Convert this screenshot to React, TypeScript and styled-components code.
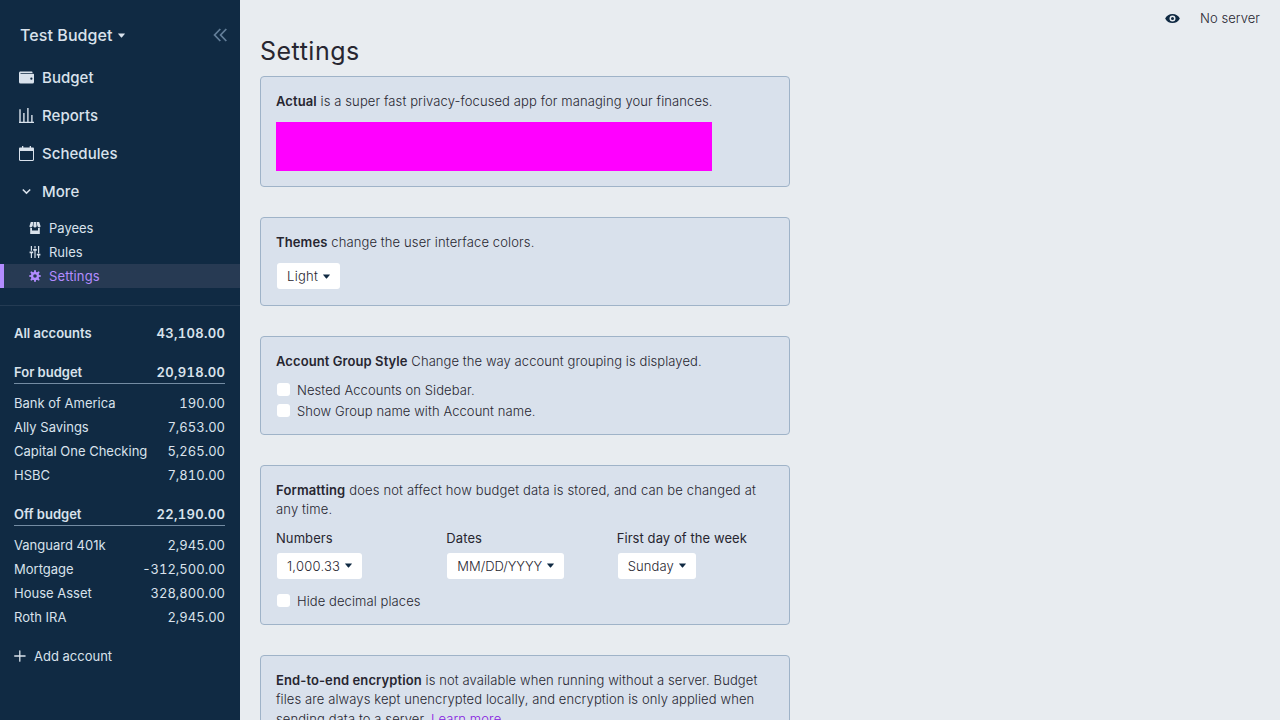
import React from 'react';
import styled, { createGlobalStyle } from 'styled-components';

const Global = createGlobalStyle`
  * { box-sizing: border-box; }
  html, body, #root { height: 100%; }
  body {
    margin: 0;
    overflow: hidden;
    font-family: Inter, 'Liberation Sans', sans-serif;
    font-size: 13px;
    color: #272630;
    background: #e8ecf0;
  }
  button { font: inherit; color: inherit; letter-spacing: inherit; margin: 0; }
  svg { display: block; flex-shrink: 0; }
  p { margin: 0; }
`;

const Layout = styled.div`
  display: flex;
  height: 720px;
`;

/* Sidebar */

const Sidebar = styled.nav`
  width: 240px;
  flex-shrink: 0;
  background: #102a43;
  color: #d9e2ec;
`;

const BudgetHeader = styled.div`
  display: flex;
  align-items: center;
  justify-content: space-between;
  height: 58px;
  padding: 12px 12px 0 20px;
`;

const BudgetName = styled.button`
  display: flex;
  align-items: center;
  gap: 5.5px;
  padding: 0;
  border: 0;
  background: none;
  font-size: 16px;
  font-weight: 500;
  letter-spacing: 0.08px;
`;

const CollapseIcon = styled.svg`
  color: #627d98;
`;

const NavItem = styled.a`
  display: flex;
  align-items: center;
  gap: 8px;
  height: 38px;
  padding-left: 19px;
  font-size: 15px;
  font-weight: 500;
  letter-spacing: 0.04px;
`;

const SubNav = styled.div`
  padding: 6px 0 17px;
  border-bottom: 1px solid #243b53;
`;

const SubItem = styled.a<{ $active?: boolean }>`
  display: flex;
  align-items: center;
  gap: 8px;
  height: 24px;
  padding-left: 25px;
  border-left: 4px solid ${p => (p.$active ? '#b38cff' : 'transparent')};
  background: ${p => (p.$active ? '#273a53' : 'none')};
  color: ${p => (p.$active ? '#b38cff' : 'inherit')};
  letter-spacing: ${p => (p.$active ? '0.12px' : '0')};
`;

const Accounts = styled.div`
  padding: 15px 15px 0 14px;
`;

const Amount = styled.span`
  font-feature-settings: 'tnum';
`;

const AccountRow = styled.div`
  display: flex;
  align-items: center;
  justify-content: space-between;
  height: 24px;
`;

const AccountGroup = styled(AccountRow)<{ $underline?: boolean }>`
  font-weight: 600;
  margin-bottom: ${p => (p.$underline ? '7px' : '15px')};
  border-bottom: ${p => (p.$underline ? '1px solid #748ca3' : '0')};
  ${Amount} { letter-spacing: 0.33px; margin-right: -0.33px; }
`;

const GroupSection = styled.section`
  margin-bottom: 15px;
`;

const AddAccount = styled.button`
  display: flex;
  align-items: center;
  gap: 8px;
  height: 24px;
  padding: 0;
  border: 0;
  background: none;
`;

/* Main */

const Main = styled.main`
  flex: 1;
  min-width: 0;
  display: flex;
  flex-direction: column;
`;

const Titlebar = styled.header`
  display: flex;
  align-items: center;
  justify-content: flex-end;
  gap: 20px;
  height: 36px;
  padding-right: 20px;
  flex-shrink: 0;
  color: #102a43;
`;

const ServerStatus = styled.span`
  font-weight: 300;
  letter-spacing: 0.05px;
  color: #272630;
`;

const Title = styled.h1`
  margin: 0 20px;
  height: 40px;
  line-height: 30px;
  font-size: 25px;
  font-weight: 400;
  letter-spacing: 0.5px;
  flex-shrink: 0;
`;

const Cards = styled.div`
  display: flex;
  flex-direction: column;
  gap: 30px;
  width: 530px;
  margin-left: 20px;
`;

const Card = styled.section`
  display: flex;
  flex-direction: column;
  align-items: flex-start;
  gap: 10px;
  padding: 15px;
  border: 1px solid #9fb3c8;
  border-radius: 4px;
  background: #d9e1ec;
  font-weight: 300;
  letter-spacing: 0.1px;
  flex-shrink: 0;
`;

const Text = styled.p<{ $tracking?: number }>`
  line-height: 19.5px;
  letter-spacing: ${p => p.$tracking ?? 0.1}px;
  strong { font-weight: 600; }
`;

const Link = styled.a`
  color: #8719e0;
  text-decoration: underline;
`;

const Banner = styled.div`
  width: 436px;
  height: 49.5px;
  background: #ff00ff;
`;

const SelectButton = styled.button<{ $tracking: number }>`
  display: flex;
  align-items: center;
  gap: 5px;
  height: 28px;
  margin-top: -0.5px;
  padding: 0 10px;
  border: 1px solid transparent;
  border-radius: 4px;
  background: #fff;
  background-clip: padding-box;
  letter-spacing: ${p => p.$tracking}px;
  svg { color: #102a43; }
`;

const CheckList = styled.div`
  display: flex;
  flex-direction: column;
  gap: 5px;
`;

const CheckRow = styled.label`
  display: flex;
  align-items: center;
  gap: 6px;
  height: 16px;
  letter-spacing: 0.08px;
`;

const Checkbox = styled.input`
  appearance: none;
  width: 15px;
  height: 15px;
  margin: 0;
  border: 1px solid transparent;
  border-radius: 4px;
  background: #fff;
  background-clip: padding-box;
`;

const Columns = styled.div`
  display: grid;
  grid-template-columns: repeat(3, 1fr);
  gap: 13px;
  width: 100%;
  margin-bottom: 3.4px;
`;

const Column = styled.div`
  display: flex;
  flex-direction: column;
  align-items: flex-start;
  gap: 6px;
`;

const ColumnTitle = styled.span`
  font-weight: 400;
  line-height: 16.5px;
  letter-spacing: 0.08px;
`;

const Caret = ({ size = 7 }: { size?: number }) => (
  <svg width={size} height={size} viewBox="0 0 22 22" fill="currentColor">
    <path d="M21.5 5.1c-.2-.4-.6-.6-1.1-.6H1.6c-.5 0-.9.2-1.1.6-.2.5-.1 1 .2 1.4l9.4 10.8c.2.3.5.4.9.4s.7-.1.9-.4l9.4-10.8c.3-.4.4-.9.2-1.4z" />
  </svg>
);

const Glyph = ({ d, size }: { d: string; size: number }) => (
  <svg width={size} height={size} viewBox="0 0 20 20" fill="currentColor">
    <path d={d} />
  </svg>
);

const WALLET =
  'M0 4c0-1.1.9-2 2-2h15a1 1 0 0 1 1 1v1H2v1h17a1 1 0 0 1 1 1v10a2 2 0 0 1-2 2H2a2 2 0 0 1-2-2V4zm16.5 9a1.5 1.5 0 1 0 0-3 1.5 1.5 0 0 0 0 3z';
const CHEVRON =
  'M9.293 12.95l.707.707L15.657 8l-1.414-1.414L10 10.828 5.757 6.586 4.343 8z';
const STORE =
  'M18 9.87V20H2V9.87a4.25 4.25 0 0 0 3-.38V14h10V9.5a4.26 4.26 0 0 0 3 .37zM3 0h4l-.67 6.03A3.43 3.43 0 0 1 3 9C1.34 9 .42 7.73.95 6.15L3 0zm5 0h4l.7 6.3c.17 1.5-.91 2.7-2.42 2.7h-.56A2.38 2.38 0 0 1 7.3 6.3L8 0zm5 0h4l2.05 6.15C19.58 7.73 18.65 9 17 9a3.42 3.42 0 0 1-3.33-2.97L13 0z';
const TUNING =
  'M17 16v4h-2v-4h-2v-3h6v3h-2zM1 9h6v3H1V9zm6-4h6v3H7V5zM3 0h2v8H3V0zm12 0h2v12h-2V0zM9 0h2v4H9V0zM3 12h2v8H3v-8zm6-4h2v12H9V8z';
const COG =
  'M3.94 6.5L2.22 3.64l1.42-1.42L6.5 3.94c.52-.3 1.1-.54 1.7-.7L9 0h2l.8 3.24c.6.16 1.18.4 1.7.7l2.86-1.72 1.42 1.42-1.72 2.86c.3.52.54 1.1.7 1.7L20 9v2l-3.24.8c-.16.6-.4 1.18-.7 1.7l1.72 2.86-1.42 1.42-2.86-1.72c-.52.3-1.1.54-1.7.7L11 20H9l-.8-3.24c-.6-.16-1.18-.4-1.7-.7l-2.86 1.72-1.42-1.42 1.72-2.86c-.3-.52-.54-1.1-.7-1.7L0 11V9l3.24-.8c.16-.6.4-1.18.7-1.7zM10 13a3 3 0 1 0 0-6 3 3 0 0 0 0 6z';
const EYE =
  'M.2 10a11 11 0 0 1 19.6 0A11 11 0 0 1 .2 10zm9.8 4a4 4 0 1 0 0-8 4 4 0 0 0 0 8zm0-2a2 2 0 1 1 0-4 2 2 0 0 1 0 4z';

const ReportsIcon = () => (
  <svg width="15" height="15" viewBox="0 0 15 15" fill="currentColor">
    <path d="M0 13.8h15V15H0zM.3 1.2h1.4V14H.3zM4.2 5h1.4v9H4.2zM8.2 0h1.4v14H8.2zM12.2 7h1.4v7h-1.4z" />
  </svg>
);

const CalendarIcon = () => (
  <svg width="15" height="15" viewBox="0 0 15 15" fill="currentColor">
    <path
      fillRule="evenodd"
      d="M3 0h1.3v1.5h6.4V0H12v1.5h1.8c.7 0 1.2.5 1.2 1.2v11c0 .7-.5 1.2-1.2 1.2H1.2C.5 14.9 0 14.4 0 13.7v-11c0-.7.5-1.2 1.2-1.2H3zM1 5v8.4c0 .3.2.5.5.5h12c.3 0 .5-.2.5-.5V5z"
    />
  </svg>
);

const DoubleChevron = () => (
  <CollapseIcon width="15" height="14" viewBox="0 0 15 14" fill="none" stroke="currentColor" strokeWidth="1.8">
    <path d="M7.3 1L1.6 7l5.7 6M13.3 1L7.6 7l5.7 6" />
  </CollapseIcon>
);

const PlusIcon = () => (
  <svg width="12" height="12" viewBox="0 0 12 12" fill="none" stroke="currentColor" strokeWidth="1.3">
    <path d="M0.7 6h10.4M5.8 0.8v10.4" strokeLinecap="round" />
  </svg>
);

const forBudget = [
  ['Bank of America', '190.00'],
  ['Ally Savings', '7,653.00'],
  ['Capital One Checking', '5,265.00'],
  ['HSBC', '7,810.00'],
];

const offBudget = [
  ['Vanguard 401k', '2,945.00'],
  ['Mortgage', '-312,500.00'],
  ['House Asset', '328,800.00'],
  ['Roth IRA', '2,945.00'],
];

const Group = ({ name, total, rows }: { name: string; total: string; rows: string[][] }) => (
  <GroupSection>
    <AccountGroup $underline>
      <span>{name}</span>
      <Amount>{total}</Amount>
    </AccountGroup>
    {rows.map(([account, balance]) => (
      <AccountRow key={account}>
        <span>{account}</span>
        <Amount>{balance}</Amount>
      </AccountRow>
    ))}
  </GroupSection>
);

const Select = ({ children, tracking = 0.1 }: { children: React.ReactNode; tracking?: number }) => (
  <SelectButton $tracking={tracking}>
    {children}
    <Caret />
  </SelectButton>
);

const Check = ({ children }: { children: React.ReactNode }) => (
  <CheckRow>
    <Checkbox type="checkbox" />
    <span>{children}</span>
  </CheckRow>
);

export default function App() {
  return (
    <>
      <Global />
      <Layout>
        <Sidebar>
          <BudgetHeader>
            <BudgetName>
              Test Budget
              <Caret />
            </BudgetName>
            <DoubleChevron />
          </BudgetHeader>
          <NavItem><Glyph d={WALLET} size={15} />Budget</NavItem>
          <NavItem><ReportsIcon />Reports</NavItem>
          <NavItem><CalendarIcon />Schedules</NavItem>
          <NavItem><Glyph d={CHEVRON} size={15} />More</NavItem>
          <SubNav>
            <SubItem><Glyph d={STORE} size={12} />Payees</SubItem>
            <SubItem><Glyph d={TUNING} size={12} />Rules</SubItem>
            <SubItem $active><Glyph d={COG} size={12} />Settings</SubItem>
          </SubNav>
          <Accounts>
            <AccountGroup>
              <span>All accounts</span>
              <Amount>43,108.00</Amount>
            </AccountGroup>
            <Group name="For budget" total="20,918.00" rows={forBudget} />
            <Group name="Off budget" total="22,190.00" rows={offBudget} />
            <AddAccount><PlusIcon />Add account</AddAccount>
          </Accounts>
        </Sidebar>
        <Main>
          <Titlebar>
            <Glyph d={EYE} size={15} />
            <ServerStatus>No server</ServerStatus>
          </Titlebar>
          <Title>Settings</Title>
          <Cards>
            <Card>
              <Text><strong>Actual</strong> is a super fast privacy-focused app for managing your finances.</Text>
              <Banner />
            </Card>
            <Card>
              <Text $tracking={0.12}><strong>Themes</strong> change the user interface colors.</Text>
              <Select tracking={0.3}>Light</Select>
            </Card>
            <Card>
              <Text $tracking={0.08}>
                <strong>Account Group Style</strong> Change the way account grouping is displayed.
              </Text>
              <CheckList>
                <Check>Nested Accounts on Sidebar.</Check>
                <Check>Show Group name with Account name.</Check>
              </CheckList>
            </Card>
            <Card>
              <Text $tracking={0.155}>
                <strong>Formatting</strong> does not affect how budget data is stored, and can be changed at any time.
              </Text>
              <Columns>
                <Column><ColumnTitle>Numbers</ColumnTitle><Select tracking={0.24}>1,000.33</Select></Column>
                <Column><ColumnTitle>Dates</ColumnTitle><Select tracking={-0.04}>MM/DD/YYYY</Select></Column>
                <Column><ColumnTitle>First day of the week</ColumnTitle><Select>Sunday</Select></Column>
              </Columns>
              <Check>Hide decimal places</Check>
            </Card>
            <Card>
              <Text>
                <strong>End-to-end encryption</strong> is not available when running without a server. Budget files are
                always kept unencrypted locally, and encryption is only applied when sending data to a server.{' '}
                <Link>Learn more…</Link>
              </Text>
            </Card>
          </Cards>
        </Main>
      </Layout>
    </>
  );
}
